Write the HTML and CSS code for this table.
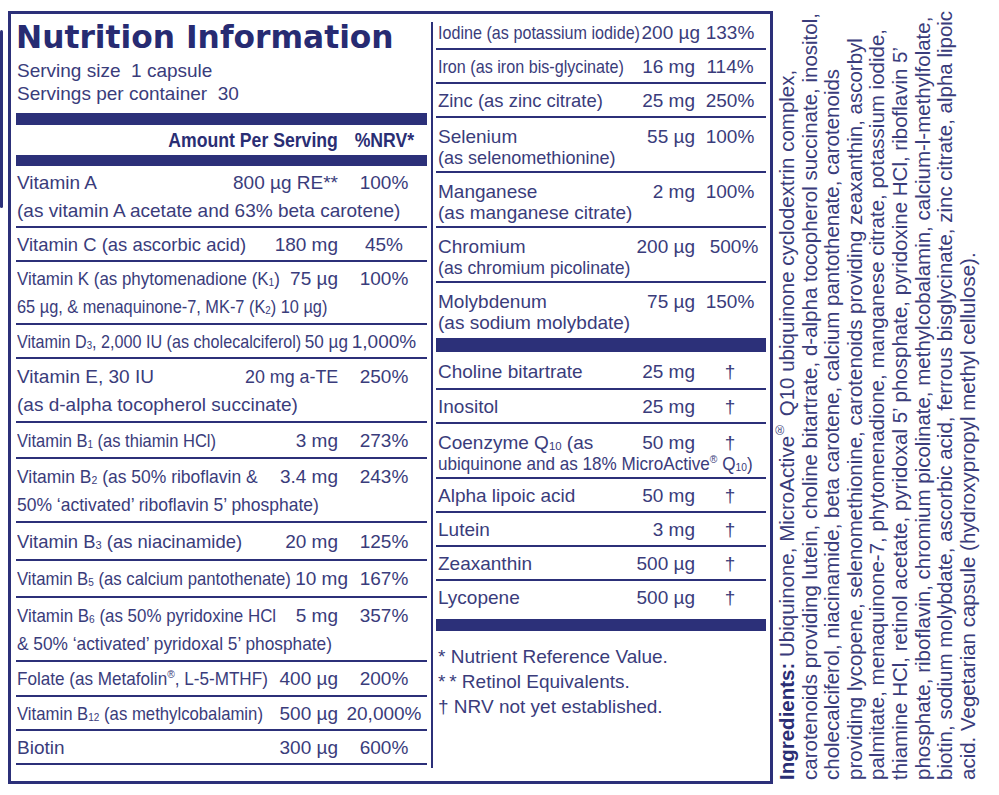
FILE: index.html
```html
<!DOCTYPE html>
<html lang="en">
<head>
<meta charset="utf-8">
<title>Nutrition Information</title>
<link rel="stylesheet" href="styles.css">
</head>
<body>
<div class="page">
  <div class="strip"></div>
  <div class="panel">
    <section class="col-left">
      <h1 class="title">Nutrition Information</h1>
      <div class="serving">Serving size&nbsp; 1 capsule<br>Servings per container&nbsp; 30</div>
      <div class="bar bar-top"></div>
      <div class="row head"><span class="nm"></span><span class="amt"><span class="hd hd-r">Amount Per Serving</span></span><span class="pct"><span class="hd">%NRV*</span></span></div>
      <div class="bar bar-mid"></div>

      <div class="row two h-s"><span class="nm">Vitamin A</span><span class="amt">800 µg RE**</span><span class="pct">100%</span><span class="ln2">(as vitamin A acetate and 63% beta carotene)</span></div>
      <div class="row h-s"><span class="nm"><span class="sx s97">Vitamin C (as ascorbic acid)</span></span><span class="amt">180 mg</span><span class="pct">45%</span></div>
      <div class="row two"><span class="nm"><span class="sx s89">Vitamin K (as phytomenadione (K<span class="sb">1</span>)</span></span><span class="amt">75 µg</span><span class="pct">100%</span><span class="ln2"><span class="sx s86">65 µg, &amp; menaquinone-7, MK-7 (K<span class="sb">2</span>) 10 µg)</span></span></div>
      <div class="row push h-s"><span class="nm"><span class="sx s85">Vitamin D<span class="sb">3</span>, 2,000 IU (as cholecalciferol)</span></span><span class="amt"><span class="sx sxr s90">50 µg</span></span><span class="pct">1,000%</span></div>
      <div class="row two h-l"><span class="nm">Vitamin E, 30 IU</span><span class="amt"><span class="sx sxr s94">20 mg a-TE</span></span><span class="pct">250%</span><span class="ln2">(as d-alpha tocopherol succinate)</span></div>
      <div class="row h-36"><span class="nm"><span class="sx s87">Vitamin B<span class="sb">1</span> (as thiamin HCl)</span></span><span class="amt">3 mg</span><span class="pct">273%</span></div>
      <div class="row two h-l"><span class="nm"><span class="sx s92">Vitamin B<span class="sb">2</span> (as 50% riboflavin &amp;</span></span><span class="amt">3.4 mg</span><span class="pct">243%</span><span class="ln2"><span class="sx s92">50% ‘activated’ riboflavin 5’ phosphate)</span></span></div>
      <div class="row h-38"><span class="nm"><span class="sx s97">Vitamin B<span class="sb">3</span> (as niacinamide)</span></span><span class="amt">20 mg</span><span class="pct">125%</span></div>
      <div class="row push h-37"><span class="nm"><span class="sx s88">Vitamin B<span class="sb">5</span> (as calcium pantothenate)</span></span><span class="amt">10 mg</span><span class="pct">167%</span></div>
      <div class="row two h-l"><span class="nm"><span class="sx s89">Vitamin B<span class="sb">6</span> (as 50% pyridoxine HCl</span></span><span class="amt">5 mg</span><span class="pct">357%</span><span class="ln2"><span class="sx s91">&amp; 50% ‘activated’ pyridoxal 5’ phosphate)</span></span></div>
      <div class="row"><span class="nm"><span class="sx s90">Folate (as Metafolin<span class="reg">®</span>, L-5-MTHF)</span></span><span class="amt">400 µg</span><span class="pct">200%</span></div>
      <div class="row h-s"><span class="nm"><span class="sx s88">Vitamin B<span class="sb">12</span> (as methylcobalamin)</span></span><span class="amt">500 µg</span><span class="pct">20,000%</span></div>
      <div class="row h-s"><span class="nm">Biotin</span><span class="amt">300 µg</span><span class="pct">600%</span></div>
    </section>

    <div class="divider"></div>

    <section class="col-mid">
      <div class="mrow"><span class="nm"><span class="sx s85">Iodine (as potassium iodide)</span></span><span class="amt amt-out">200 µg</span><span class="pct">133%</span></div>
      <div class="mrow"><span class="nm"><span class="sx s85">Iron (as iron bis-glycinate)</span></span><span class="amt">16 mg</span><span class="pct">114%</span></div>
      <div class="mrow"><span class="nm"><span class="sx s97">Zinc (as zinc citrate)</span></span><span class="amt">25 mg</span><span class="pct">250%</span></div>
      <div class="mrow two"><span class="nm">Selenium</span><span class="amt">55 µg</span><span class="pct">100%</span><span class="ln2"><span class="sx s95">(as selenomethionine)</span></span></div>
      <div class="mrow two"><span class="nm">Manganese</span><span class="amt">2 mg</span><span class="pct">100%</span><span class="ln2">(as manganese citrate)</span></div>
      <div class="mrow two"><span class="nm">Chromium</span><span class="amt">200 µg</span><span class="pct pct-r">500%</span><span class="ln2"><span class="sx s93">(as chromium picolinate)</span></span></div>
      <div class="mrow two last"><span class="nm">Molybdenum</span><span class="amt">75 µg</span><span class="pct">150%</span><span class="ln2">(as sodium molybdate)</span></div>
      <div class="bar bar-m1"></div>

      <div class="mrow first"><span class="nm">Choline bitartrate</span><span class="amt">25 mg</span><span class="pct">†</span></div>
      <div class="mrow"><span class="nm">Inositol</span><span class="amt">25 mg</span><span class="pct">†</span></div>
      <div class="mrow two"><span class="nm">Coenzyme Q<span class="sb">10</span> (as</span><span class="amt">50 mg</span><span class="pct">†</span><span class="ln2"><span class="sx s90">ubiquinone and as 18% MicroActive<span class="reg">®</span> Q<span class="sb">10</span>)</span></span></div>
      <div class="mrow"><span class="nm">Alpha lipoic acid</span><span class="amt">50 mg</span><span class="pct">†</span></div>
      <div class="mrow"><span class="nm">Lutein</span><span class="amt">3 mg</span><span class="pct">†</span></div>
      <div class="mrow"><span class="nm">Zeaxanthin</span><span class="amt">500 µg</span><span class="pct">†</span></div>
      <div class="mrow last end"><span class="nm">Lycopene</span><span class="amt">500 µg</span><span class="pct">†</span></div>
      <div class="bar bar-m2"></div>

      <div class="notes">
        <div>* Nutrient Reference Value.</div>
        <div>*&#8201;* Retinol Equivalents.</div>
        <div>† NRV not yet established.</div>
      </div>
    </section>
  </div>

  <div class="ingredients"><b>Ingredients:</b> Ubiquinone, MicroActive<span class="reg">®</span> Q10 ubiquinone cyclodextrin complex,<br>carotenoids providing lutein, choline bitartrate, d-alpha tocopherol succinate, inositol,<br>cholecalciferol, niacinamide, beta carotene, calcium pantothenate, carotenoids<br>providing lycopene, selenomethionine, carotenoids providing zeaxanthin, ascorbyl<br>palmitate, menaquinone-7, phytomenadione, manganese citrate, potassium iodide,<br>thiamine HCl, retinol acetate, pyridoxal 5’ phosphate, pyridoxine HCl, riboflavin 5’<br>phosphate, riboflavin, chromium picolinate, methylcobalamin, calcium-l-methylfolate,<br>biotin, sodium molybdate, ascorbic acid, ferrous bisglycinate, zinc citrate, alpha lipoic<br>acid. Vegetarian capsule (hydroxypropyl methyl cellulose).</div>
</div>
</body>
</html>
```

FILE: styles.css
```css
* {
  box-sizing: border-box;
}

html,
body {
  margin: 0;
  padding: 0;
  background: #ffffff;
}

body {
  width: 999px;
  height: 795px;
  overflow: hidden;
  font-family: "Liberation Sans", Arial, sans-serif;
  font-size: 19px;
  color: #3a3c7b;
}

.page {
  display: flex;
  align-items: flex-start;
}

.strip {
  flex: none;
  width: 3px;
  height: 178px;
  margin-top: 30px;
  background: #2c3079;
  border-radius: 2px;
}

.panel {
  flex: none;
  display: flex;
  width: 765px;
  height: 773px;
  margin-left: 5px;
  margin-top: 11px;
  padding: 0 4px 0 5px;
  border: 3px solid #2c3079;
}

/* ---------- left column ---------- */
.col-left {
  flex: none;
  width: 411px;
}

.title {
  margin: 5px 0 0 0;
  font-family: "DejaVu Sans", "Liberation Sans", sans-serif;
  font-weight: bold;
  font-size: 31.3px;
  line-height: 36px;
  color: #272b72;
  white-space: nowrap;
}

.serving {
  margin-top: 4px;
  padding-left: 1px;
  line-height: 23px;
  white-space: nowrap;
}

.bar {
  background: #2c3079;
}

.bar-top {
  height: 12px;
  margin-top: 8px;
}

.bar-mid {
  height: 11px;
}

.row {
  display: grid;
  grid-template-columns: minmax(0, 1fr) auto 78px;
  column-gap: 7px;
  padding: 3px 4px 2px 1px;
  line-height: 28px;
  border-bottom: 2px solid #2c3079;
  white-space: nowrap;
}

/* row height variants (match the printed label) */
.row.h-s {
  padding-bottom: 1px;
}

.row.h-l {
  padding-top: 4px;
  padding-bottom: 2px;
}

.row.h-36 {
  padding-top: 4px;
  padding-bottom: 2px;
}

.row.h-37 {
  padding-top: 4px;
  padding-bottom: 3px;
}

.row.h-38 {
  padding-top: 5px;
  padding-bottom: 3px;
}

.row.head {
  height: 30px;
  padding: 0 4px 0 1px;
  line-height: 30px;
  border-bottom: 0;
}

.hd {
  display: inline-block;
  font-weight: bold;
  font-size: 21px;
  color: #2a2e74;
  transform: scaleX(0.84);
  transform-origin: 50% 50%;
}

.hd-r {
  transform-origin: 100% 50%;
}

.nm {
  min-width: 0;
  overflow: visible;
}

.amt {
  text-align: right;
}

.pct {
  text-align: center;
}

.ln2 {
  grid-column: 1 / -1;
}

.row.push .amt {
  margin-right: -10px;
}

/* ---------- divider ---------- */
.divider {
  flex: none;
  width: 2px;
  margin: 8px 3px 13px 4px;
  background: #2c3079;
}

/* ---------- middle column ---------- */
.col-mid {
  flex: none;
  width: 330px;
  padding-top: 2px;
}

.mrow {
  display: grid;
  grid-template-columns: minmax(0, 1fr) auto 62px;
  column-gap: 4px;
  padding: 3px 5px 1px 2px;
  line-height: 28px;
  border-bottom: 2px solid #2c3079;
  white-space: nowrap;
}

.mrow.two {
  line-height: 21px;
  padding-top: 8px;
  padding-bottom: 3px;
}

.mrow.last {
  border-bottom: 0;
  padding-bottom: 5px;
}

.mrow.end {
  padding-bottom: 7px;
}

.mrow.first {
  padding-top: 6px;
  padding-bottom: 2px;
}

.amt-out {
  margin-right: -5px;
}

.pct-r {
  padding-left: 8px;
}

.bar-m1 {
  height: 14px;
}

.bar-m2 {
  height: 12px;
}

.notes {
  padding: 13px 0 0 2px;
  line-height: 25px;
  white-space: nowrap;
}

/* ---------- condensed text helpers ---------- */
.sx {
  display: inline-block;
  transform-origin: 0 50%;
}

.sxr {
  transform-origin: 100% 50%;
}

.s85 { transform: scaleX(0.85); }
.s86 { transform: scaleX(0.86); }
.s87 { transform: scaleX(0.87); }
.s88 { transform: scaleX(0.88); }
.s89 { transform: scaleX(0.89); }
.s90 { transform: scaleX(0.90); }
.s91 { transform: scaleX(0.91); }
.s92 { transform: scaleX(0.92); }
.s93 { transform: scaleX(0.93); }
.s94 { transform: scaleX(0.94); }
.s95 { transform: scaleX(0.95); }
.s96 { transform: scaleX(0.96); }
.s97 { transform: scaleX(0.97); }

.sb {
  font-size: 0.6em;
  line-height: 0;
  vertical-align: -0.05em;
}

.reg {
  font-size: 0.6em;
  line-height: 0;
  vertical-align: 0.6em;
}

/* ---------- ingredients (rotated) ---------- */
.ingredients {
  flex: none;
  height: 768px;
  margin-left: 3px;
  margin-top: 12px;
  writing-mode: vertical-rl;
  transform: rotate(180deg);
  font-size: 20.5px;
  line-height: 22.6px;
  white-space: nowrap;
  color: #3a3c7b;
}

.ingredients b {
  color: #2a2e74;
}
```
